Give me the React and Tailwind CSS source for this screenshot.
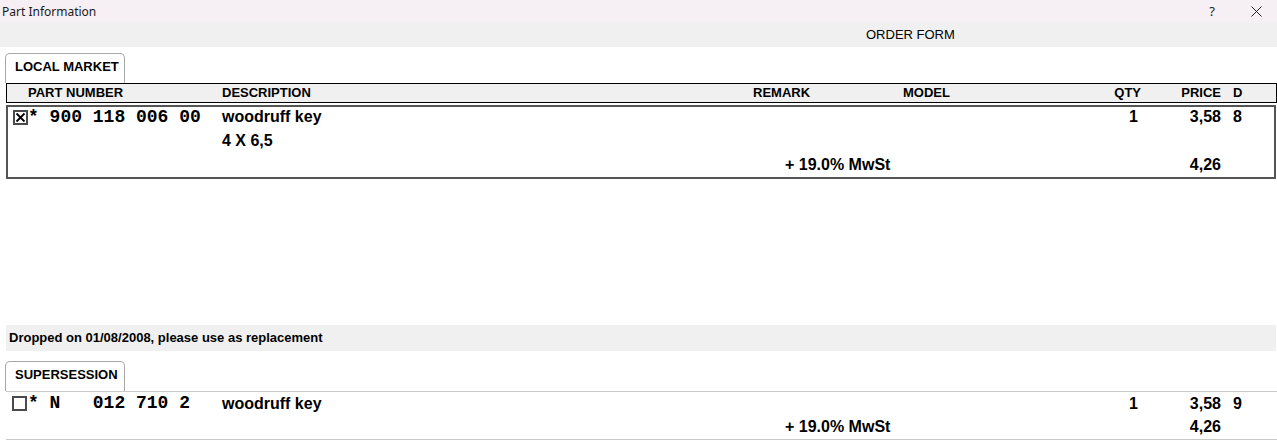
import React from 'react';

const Check = ({ checked }) => (
  <div className="w-[15px] h-[15px] border-2 border-[#4a4a4a] bg-white flex items-center justify-center shrink-0">
    {checked && (
      <svg width="11" height="11" viewBox="0 0 11 11">
        <path d="M1.5 1.5 L9.5 9.5 M9.5 1.5 L1.5 9.5" stroke="#000" strokeWidth="1.8" />
      </svg>
    )}
  </div>
);

const Tab = ({ label }) => (
  <div className="ml-[5px] w-[120px] h-[30px] border border-b-0 border-[#a8a8a8] rounded-t-[5px] bg-white flex items-center pl-[9px] pb-[3px] text-[13px] font-bold">
    {label}
  </div>
);

const mono = { fontFamily: '"Liberation Mono", "Courier New", monospace' };

const App = () => {
  return (
    <div className="w-[1277px] h-[440px] bg-white text-black overflow-hidden" style={{ fontFamily: '"Liberation Sans", Arial, sans-serif' }}>
      {/* Title bar */}
      <div className="h-[23px] bg-[#f6eff3] flex items-center pl-[2px]">
        <span className="text-[12px] text-[#1a1a1a]" style={{ fontFamily: '"Noto Sans", "Open Sans", sans-serif' }}>Part Information</span>
        <div className="ml-auto flex items-center">
          <span className="text-[13px] text-[#222] mr-[36px]" style={{ fontFamily: '"Noto Sans", sans-serif' }}>?</span>
          <svg width="11" height="11" viewBox="0 0 11 11" className="mr-[15px]">
            <path d="M0.5 0.5 L10.5 10.5 M10.5 0.5 L0.5 10.5" stroke="#222" strokeWidth="1" />
          </svg>
        </div>
      </div>

      {/* Order form bar */}
      <div className="h-[24px] bg-[#f0f0f0] flex items-center pl-[866px] text-[13px]">ORDER FORM</div>

      {/* Local market */}
      <div className="mt-[6px]">
        <Tab label="LOCAL MARKET" />
        <div className="ml-[6px] w-[1271px] h-[20px] border border-black bg-[#f0f0f0] flex items-center text-[13px] font-bold">
          <div className="w-[215px] pl-[21px]">PART NUMBER</div>
          <div className="w-[531px]">DESCRIPTION</div>
          <div className="w-[150px]">REMARK</div>
          <div className="w-[190px]">MODEL</div>
          <div className="w-[48px] text-right">QTY</div>
          <div className="w-[80px] text-right">PRICE</div>
          <div className="pl-[12px]">D</div>
        </div>
        <div className="ml-[6px] mt-[2px] w-[1270px] border-2 border-[#555] text-[16px] font-bold">
          <div className="h-[20px] flex items-center">
            <div className="w-[214px] flex items-center">
              <div className="ml-[5px]"><Check checked /></div>
              <span className="text-[18px] whitespace-pre" style={mono}>{'* 900 118 006 00'}</span>
            </div>
            <div className="w-[531px]">woodruff key</div>
            <div className="w-[150px]"></div>
            <div className="w-[190px]"></div>
            <div className="w-[45px] text-right">1</div>
            <div className="w-[83px] text-right">3,58</div>
            <div className="pl-[12px]">8</div>
          </div>
          <div className="mt-[2px] h-[24px] flex items-center pl-[214px]">4 X 6,5</div>
          <div className="h-[24px] flex items-center">
            <div className="w-[777px]"></div>
            <div className="w-[353px]">+ 19.0% MwSt</div>
            <div className="w-[83px] text-right">4,26</div>
          </div>
        </div>
      </div>

      {/* Dropped notice */}
      <div className="mt-[146px] ml-[6px] w-[1270px] h-[26px] bg-[#f0f0f0] flex items-center pl-[3px] text-[13px] font-bold">
        Dropped on 01/08/2008, please use as replacement
      </div>

      {/* Supersession */}
      <div className="mt-[10px]">
        <Tab label="SUPERSESSION" />
        <div className="ml-[6px] w-[1271px] border-t border-b border-[#c8c8c8] text-[16px] font-bold">
          <div className="h-[23px] flex items-center">
            <div className="w-[216px] flex items-center">
              <div className="ml-[6px]"><Check /></div>
              <span className="ml-[1px] text-[18px] whitespace-pre" style={mono}>{'* N   012 710 2'}</span>
            </div>
            <div className="w-[531px]">woodruff key</div>
            <div className="w-[150px]"></div>
            <div className="w-[190px]"></div>
            <div className="w-[45px] text-right">1</div>
            <div className="w-[83px] text-right">3,58</div>
            <div className="pl-[12px]">9</div>
          </div>
          <div className="h-[24px] flex items-center">
            <div className="w-[779px]"></div>
            <div className="w-[353px]">+ 19.0% MwSt</div>
            <div className="w-[83px] text-right">4,26</div>
          </div>
        </div>
      </div>
    </div>
  );
};

export default App;
